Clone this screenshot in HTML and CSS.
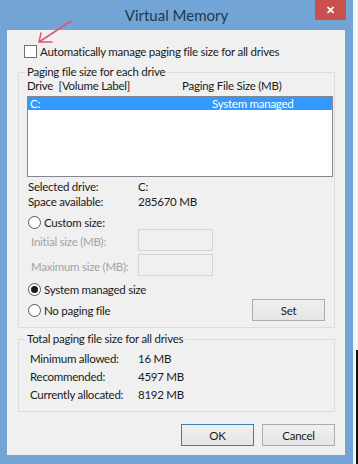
FILE: index.html
```html
<!DOCTYPE html>
<html lang="en">
<head>
  <meta charset="UTF-8" />
  <title>Virtual Memory</title>
  <link rel="stylesheet" href="styles.css">
</head>
<body>
  <div class="screen">
    <div class="window">
      <div class="titlebar">
        <span></span>
        <span class="title">Virtual Memory</span>
        <span class="close">&#x2715;</span>
      </div>
      <div class="client">
        <div class="auto-row">
          <span class="check"></span>
          <span>Automatically manage paging file size for all drives</span>
        </div>

        <fieldset class="group first">
          <legend>Paging file size for each drive</legend>
          <div class="list-head">
            <span class="col-drive">Drive&nbsp; [Volume Label]</span>
            <span>Paging File Size (MB)</span>
          </div>
          <div class="listbox">
            <div class="list-item selected">
              <span class="col-drive">C:</span>
              <span>System managed</span>
            </div>
          </div>

          <div class="info">
            <div class="info-row"><span class="lbl">Selected drive:</span><span>C:</span></div>
            <div class="info-row"><span class="lbl">Space available:</span><span>285670 MB</span></div>
          </div>

          <div class="radio-row custom"><span class="radio"></span>Custom size:</div>
          <div class="size-row"><span class="lbl muted">Initial size (MB):</span><span class="textbox"></span></div>
          <div class="size-row second"><span class="lbl muted">Maximum size (MB):</span><span class="textbox"></span></div>
          <div class="radio-row managed"><span class="radio on"></span>System managed size</div>
          <div class="last-row">
            <div class="radio-row"><span class="radio"></span>No paging file</div>
            <button class="btn set">Set</button>
          </div>
        </fieldset>

        <fieldset class="group totals">
          <legend>Total paging file size for all drives</legend>
          <div class="total-row"><span class="lbl">Minimum allowed:</span><span>16 MB</span></div>
          <div class="total-row"><span class="lbl">Recommended:</span><span>4597 MB</span></div>
          <div class="total-row"><span class="lbl">Currently allocated:</span><span>8192 MB</span></div>
        </fieldset>

        <div class="actions">
          <button class="btn default">OK</button>
          <button class="btn">Cancel</button>
        </div>
      </div>
    </div>
    <div class="edge"><div class="edge-dark"></div></div>
  </div>

  <svg class="arrow" width="80" height="50" viewBox="0 0 80 50">
    <path d="M71 21 L39 42 M39 42 L41 33 M39 42 L52 42" fill="none" stroke="#de5472" stroke-width="1.5" stroke-linecap="round"/>
  </svg>
</body>
</html>
```

FILE: styles.css
```css
* {
  box-sizing: border-box;
}

body {
  margin: 0;
  background: #fff;
  font-family: Lato, "Liberation Sans", sans-serif;
  font-size: 11.5px;
  letter-spacing: -0.25px;
  color: #1a1a1a;
}

.screen {
  display: flex;
  width: 358px;
  height: 464px;
  overflow: hidden;
}

.window {
  width: 353px;
  height: 464px;
  background: #72a5d6;
}

.titlebar {
  height: 30px;
  display: grid;
  grid-template-columns: 1fr auto 1fr;
  align-items: start;
}

.title {
  font-size: 15px;
  letter-spacing: 0;
  color: #22384f;
  line-height: 30px;
}

.close {
  justify-self: end;
  margin-right: 7px;
  width: 31px;
  height: 20px;
  background: #c9504c;
  color: #fff;
  font-size: 11px;
  font-weight: bold;
  text-align: center;
  line-height: 20px;
}

.client {
  margin: 0 8px 0 7px;
  height: 425px;
  background: #f0f0f0;
  padding-top: 14px;
}

.auto-row {
  display: flex;
  align-items: center;
  height: 15px;
  padding-left: 17px;
  gap: 3px;
}

.check {
  width: 13px;
  height: 13px;
  border: 1px solid #707070;
  background: #fff;
}

.group {
  margin: 0 10px 0 11px;
  border: 1px solid #dcdcdc;
  padding: 0 1px 0 8px;
}

.group legend {
  padding: 0 2px;
  margin-left: -2px;
  line-height: 12px;
}

.group.first {
  margin-top: 7px;
  padding-bottom: 6px;
}

.list-head {
  display: flex;
  height: 15px;
  line-height: 15px;
}

.col-drive {
  width: 155px;
}

.listbox {
  margin-top: 3px;
  height: 81px;
  border: 1px solid #828790;
  background: #fff;
}

.list-item {
  display: flex;
  height: 13px;
  line-height: 13px;
  padding-left: 2px;
}

.list-item .col-drive {
  width: 182px;
}

.selected {
  background: #3399ff;
  color: #fff;
}

.info {
  margin-top: 2px;
}

.info-row {
  display: flex;
  height: 15px;
  line-height: 15px;
  padding-left: 1px;
}

.lbl {
  width: 110px;
  flex: none;
}

.radio-row {
  display: flex;
  align-items: center;
  gap: 3px;
  height: 13px;
  padding-left: 1px;
}

.radio {
  width: 13px;
  height: 13px;
  border-radius: 50%;
  border: 1px solid #555;
  background: #fff;
  display: flex;
  align-items: center;
  justify-content: center;
}

.radio.on::after {
  content: "";
  width: 7px;
  height: 7px;
  border-radius: 50%;
  background: #1a1a1a;
}

.radio-row.custom {
  margin-top: 7px;
}

.size-row {
  display: flex;
  align-items: center;
  height: 22px;
  padding-left: 4px;
}

.size-row .lbl {
  width: 107px;
  padding-top: 3px;
}

.size-row.second {
  margin-top: 3px;
}

.muted {
  color: #a3a3a3;
}

.textbox {
  width: 75px;
  height: 22px;
  border: 1px solid #d5d5d5;
  background: #f0f0f0;
}

.radio-row.managed {
  margin-top: 7px;
}

.last-row {
  display: flex;
  align-items: center;
  justify-content: space-between;
  margin-top: 3px;
  padding-right: 8px;
}

.btn {
  font: inherit;
  letter-spacing: inherit;
  color: #1a1a1a;
  height: 22px;
  padding: 0;
  border: 1px solid #acacac;
  background: linear-gradient(#f0f0f0, #e5e5e5);
}

.btn.set {
  width: 73px;
}

.btn.default {
  border-color: #3c7fb1;
}

.group.totals {
  margin-top: 5px;
  padding-bottom: 7px;
}

.total-row {
  display: flex;
  height: 18px;
  line-height: 18px;
  padding-left: 3px;
}

.total-row .lbl {
  width: 108px;
}

.total-row:first-of-type {
  margin-top: 5px;
}

.actions {
  display: flex;
  justify-content: flex-end;
  gap: 8px;
  margin-top: 12px;
  padding-right: 10px;
}

.actions .btn {
  width: 73px;
}

.edge {
  width: 5px;
  height: 464px;
  background: #f4f4f4;
  display: flex;
  flex-direction: column;
  justify-content: flex-end;
  align-items: flex-end;
}

.edge-dark {
  width: 2px;
  height: 114px;
  background: #111;
}

.arrow {
  position: absolute;
  left: 0;
  top: 0;
}
```
